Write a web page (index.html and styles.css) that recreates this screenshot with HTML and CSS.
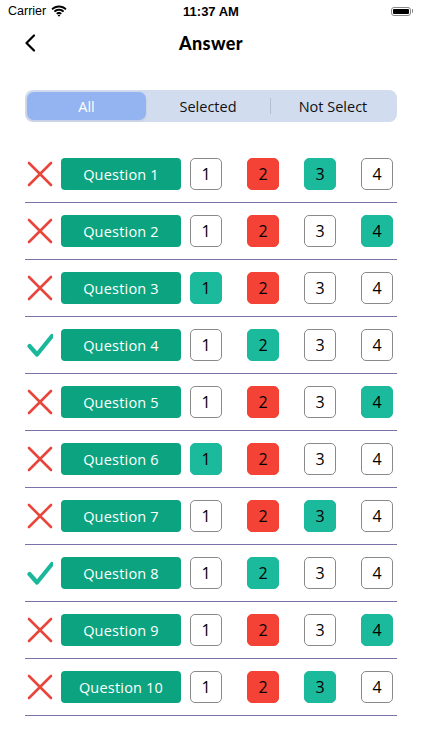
FILE: index.html
```html
<!DOCTYPE html>
<html lang="en">
<head>
    <meta charset="UTF-8">
    <meta name="viewport" content="width=device-width, initial-scale=1.0">
    <title>Answer</title>
    <link rel="stylesheet" href="styles.css">
</head>
<body>
<div class="status-bar">
    <div class="status-left">
        <span>Carrier</span>
        <svg class="wifi" width="16" height="12" viewBox="0 0 15 11">
            <path d="M7.5 2.2c2.3 0 4.4.9 5.9 2.4l1.2-1.2C12.7 1.5 10.2.4 7.5.4S2.3 1.5.4 3.4l1.2 1.2C3.1 3.1 5.2 2.2 7.5 2.2z" fill="#000"/>
            <path d="M7.5 5.2c1.4 0 2.7.6 3.7 1.5l1.2-1.2C11.1 4.2 9.4 3.4 7.5 3.4S3.9 4.2 2.6 5.5l1.2 1.2c1-.9 2.3-1.5 3.7-1.5z" fill="#000"/>
            <path d="M7.5 8.2c.6 0 1.1.2 1.5.6l1.2-1.2C9.5 6.9 8.5 6.4 7.5 6.4s-2 .5-2.7 1.2L6 8.8c.4-.4.9-.6 1.5-.6zM7.5 10.8L8.8 9.5C8.5 9.2 8 9 7.5 9s-1 .2-1.3.5z" fill="#000"/>
        </svg>
    </div>
    <div class="status-time">11:37 AM</div>
    <div class="status-right">
        <div class="battery"><div class="battery-level"></div></div>
        <div class="battery-tip"></div>
    </div>
</div>

<div class="nav-bar">
    <svg class="back" width="12" height="18" viewBox="0 0 12 18">
        <path d="M10 1.5L2.5 9l7.5 7.5" fill="none" stroke="#000" stroke-width="2.2" stroke-linecap="round" stroke-linejoin="round"/>
    </svg>
    <div class="nav-title">Answer</div>
</div>

<div class="segments">
    <div class="segment active">All</div>
    <div class="segment">Selected</div>
    <div class="segment-divider"></div>
    <div class="segment">Not Select</div>
</div>

<div class="answer-list" id="list"></div>

<script>
    // ok: 1 = right answer ; correct / chosen option per question
    const answers = [
        {ok: 0, correct: 3, chosen: 2},
        {ok: 0, correct: 4, chosen: 2},
        {ok: 0, correct: 1, chosen: 2},
        {ok: 1, correct: 2, chosen: 2},
        {ok: 0, correct: 4, chosen: 2},
        {ok: 0, correct: 1, chosen: 2},
        {ok: 0, correct: 3, chosen: 2},
        {ok: 1, correct: 2, chosen: 2},
        {ok: 0, correct: 4, chosen: 2},
        {ok: 0, correct: 3, chosen: 2}
    ];

    const crossIcon = '<svg width="26" height="26" viewBox="0 0 26 26"><path d="M2 2l22 22M24 2L2 24" stroke="#e8463a" stroke-width="2.6" stroke-linecap="round"/></svg>';
    const checkIcon = '<svg width="26" height="26" viewBox="0 0 26 26"><path d="M2.5 14l7.5 8.5L25 4" fill="none" stroke="#1bb79b" stroke-width="4.2" stroke-linecap="round" stroke-linejoin="round"/></svg>';

    const list = document.getElementById('list');
    answers.forEach((a, i) => {
        const row = document.createElement('div');
        row.className = 'answer-row';
        let html = '<div class="mark">' + (a.ok ? checkIcon : crossIcon) + '</div>';
        html += '<div class="question">Question ' + (i + 1) + '</div>';
        html += '<div class="options">';
        for (let n = 1; n <= 4; n++) {
            let cls = 'option';
            if (n === a.correct) cls += ' correct';
            else if (n === a.chosen) cls += ' wrong';
            html += '<div class="' + cls + '">' + n + '</div>';
        }
        html += '</div>';
        row.innerHTML = html;
        list.appendChild(row);
    });
</script>
</body>
</html>
```

FILE: styles.css
```css
body {
    margin: 0;
    background: #fff;
    font-family: "Open Sans", "Noto Sans", sans-serif;
    color: #000;
}
.status-bar {
    height: 22px;
    display: flex;
    align-items: center;
    justify-content: space-between;
    padding: 0 9px 0 8px;
    font-family: "Liberation Sans", Arial, sans-serif;
    font-size: 12.5px;
    position: relative;
}
.status-left {
    display: flex;
    align-items: center;
    gap: 5px;
}
.status-time {
    position: absolute;
    left: 50%;
    transform: translateX(-50%);
    font-weight: bold;
    font-size: 13px;
}
.status-right {
    display: flex;
    align-items: center;
    gap: 1px;
}
.battery {
    width: 20px;
    height: 9px;
    border: 1px solid #888;
    border-radius: 3px;
    padding: 1px;
    box-sizing: border-box;
    display: flex;
}
.battery-level {
    flex: 1;
    background: #000;
    border-radius: 1px;
}
.battery-tip {
    width: 1.5px;
    height: 4px;
    background: #888;
    border-radius: 0 1px 1px 0;
}
.nav-bar {
    height: 42px;
    display: flex;
    align-items: center;
    justify-content: center;
    position: relative;
}
.back {
    position: absolute;
    left: 24px;
    top: 12px;
}
.nav-title {
    font-family: "Lato", sans-serif;
    font-weight: 900;
    font-size: 18px;
    letter-spacing: 0.4px;
}
.segments {
    margin: 26px 25px 0;
    height: 32px;
    background: #d1dcef;
    border-radius: 8px;
    display: flex;
    align-items: center;
    padding: 0 2px;
    box-sizing: border-box;
}
.segment {
    flex: 1;
    height: 28px;
    display: flex;
    align-items: center;
    justify-content: center;
    font-size: 14.5px;
    color: #111;
    border-radius: 7px;
}
.segment.active {
    flex: 0 0 119px;
    background: #93b3f1;
    color: #fff;
    box-shadow: 0 1px 3px rgba(0, 0, 0, 0.08);
}
.segment-divider {
    width: 1px;
    height: 16px;
    background: #b5bfd2;
}
.answer-list {
    margin: 24px 25px 0;
}
.answer-row {
    display: flex;
    align-items: center;
    height: 56px;
    border-bottom: 1px solid #7d6fa8;
}
.mark {
    width: 26px;
    height: 26px;
    margin-left: 2px;
}
.question {
    margin-left: 8px;
    width: 120px;
    height: 32px;
    background: #0ca480;
    border-radius: 4px;
    color: #fff;
    font-size: 14.5px;
    letter-spacing: 0.2px;
    display: flex;
    align-items: center;
    justify-content: center;
}
.options {
    display: flex;
    gap: 25px;
    margin-left: 9px;
}
.option {
    width: 32px;
    height: 32px;
    box-sizing: border-box;
    border: 1px solid #8a8a8a;
    border-radius: 5px;
    display: flex;
    align-items: center;
    justify-content: center;
    font-size: 16px;
}
.option.correct {
    background: #1cba9d;
    border-color: #1cba9d;
}
.option.wrong {
    background: #f44336;
    border-color: #f44336;
}
```
